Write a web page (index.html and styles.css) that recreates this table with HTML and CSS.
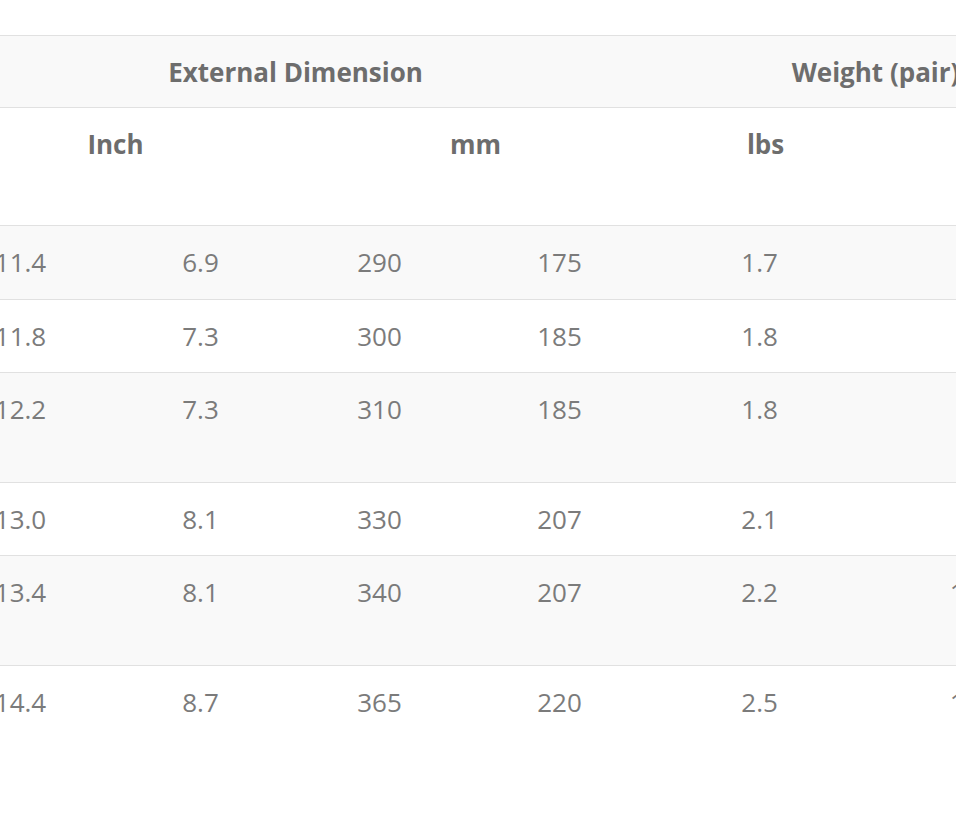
FILE: index.html
```html
<!DOCTYPE html>
<html lang="en">
<head>
<meta charset="utf-8">
<title>Size chart</title>
<link rel="stylesheet" href="styles.css">
</head>
<body>
<div class="crop">
  <table class="spec">
    <colgroup>
      <col class="c-a"><col class="c-b"><col class="c-c"><col class="c-d"><col class="c-e"><col class="c-f">
    </colgroup>
    <thead>
      <tr class="group-row">
        <th colspan="4">External Dimension</th>
        <th colspan="2">Weight (pair)</th>
      </tr>
      <tr class="unit-row">
        <th colspan="2">Inch</th>
        <th colspan="2">mm</th>
        <th>lbs</th>
        <th>g</th>
      </tr>
    </thead>
    <tbody>
      <tr><td>11.4</td><td>6.9</td><td>290</td><td>175</td><td>1.7</td><td>770</td></tr>
      <tr><td>11.8</td><td>7.3</td><td>300</td><td>185</td><td>1.8</td><td>820</td></tr>
      <tr class="two-line"><td>12.2</td><td>7.3</td><td>310</td><td>185</td><td>1.8</td><td>820</td></tr>
      <tr><td>13.0</td><td>8.1</td><td>330</td><td>207</td><td>2.1</td><td>950</td></tr>
      <tr class="two-line"><td>13.4</td><td>8.1</td><td>340</td><td>207</td><td>2.2</td><td>1000</td></tr>
      <tr><td>14.4</td><td>8.7</td><td>365</td><td>220</td><td>2.5</td><td>1130</td></tr>
    </tbody>
  </table>
</div>
</body>
</html>
```

FILE: styles.css
```css
html, body {
  margin: 0;
  padding: 0;
  background: #ffffff;
}

body {
  font-family: "Open Sans", "Noto Sans", sans-serif;
  font-size: 26px;
  line-height: 36px;
  color: #7b7b7b;
}

.crop {
  width: 956px;
  height: 838px;
  overflow: hidden;
  padding-top: 35px;
  box-sizing: border-box;
}

.spec {
  border-collapse: collapse;
  table-layout: fixed;
  width: 1160px;
  margin-left: -74px;
}

.c-a { width: 182px; }
.c-b { width: 178px; }
.c-c { width: 180px; }
.c-d { width: 180px; }
.c-e { width: 220px; }
.c-f { width: 220px; }

.spec th,
.spec td {
  border-top: 1px solid #e1e1e1;
  vertical-align: top;
  text-align: center;
  white-space: nowrap;
}

.spec th {
  padding: 18px 0 18px 19px;
  font-weight: 700;
  color: #6d6d6d;
}

.spec td {
  padding: 18px 0 18.5px 7px;
  font-weight: 400;
}

.group-row th {
  padding-top: 17.5px;
  padding-bottom: 17.5px;
  background: #f9f9f9;
}

.unit-row th {
  height: 81px;
  border-bottom: 1px solid #e1e1e1;
}

.spec tbody tr:nth-child(odd) td {
  background: #f9f9f9;
}

.two-line td {
  height: 72px;
}
```
